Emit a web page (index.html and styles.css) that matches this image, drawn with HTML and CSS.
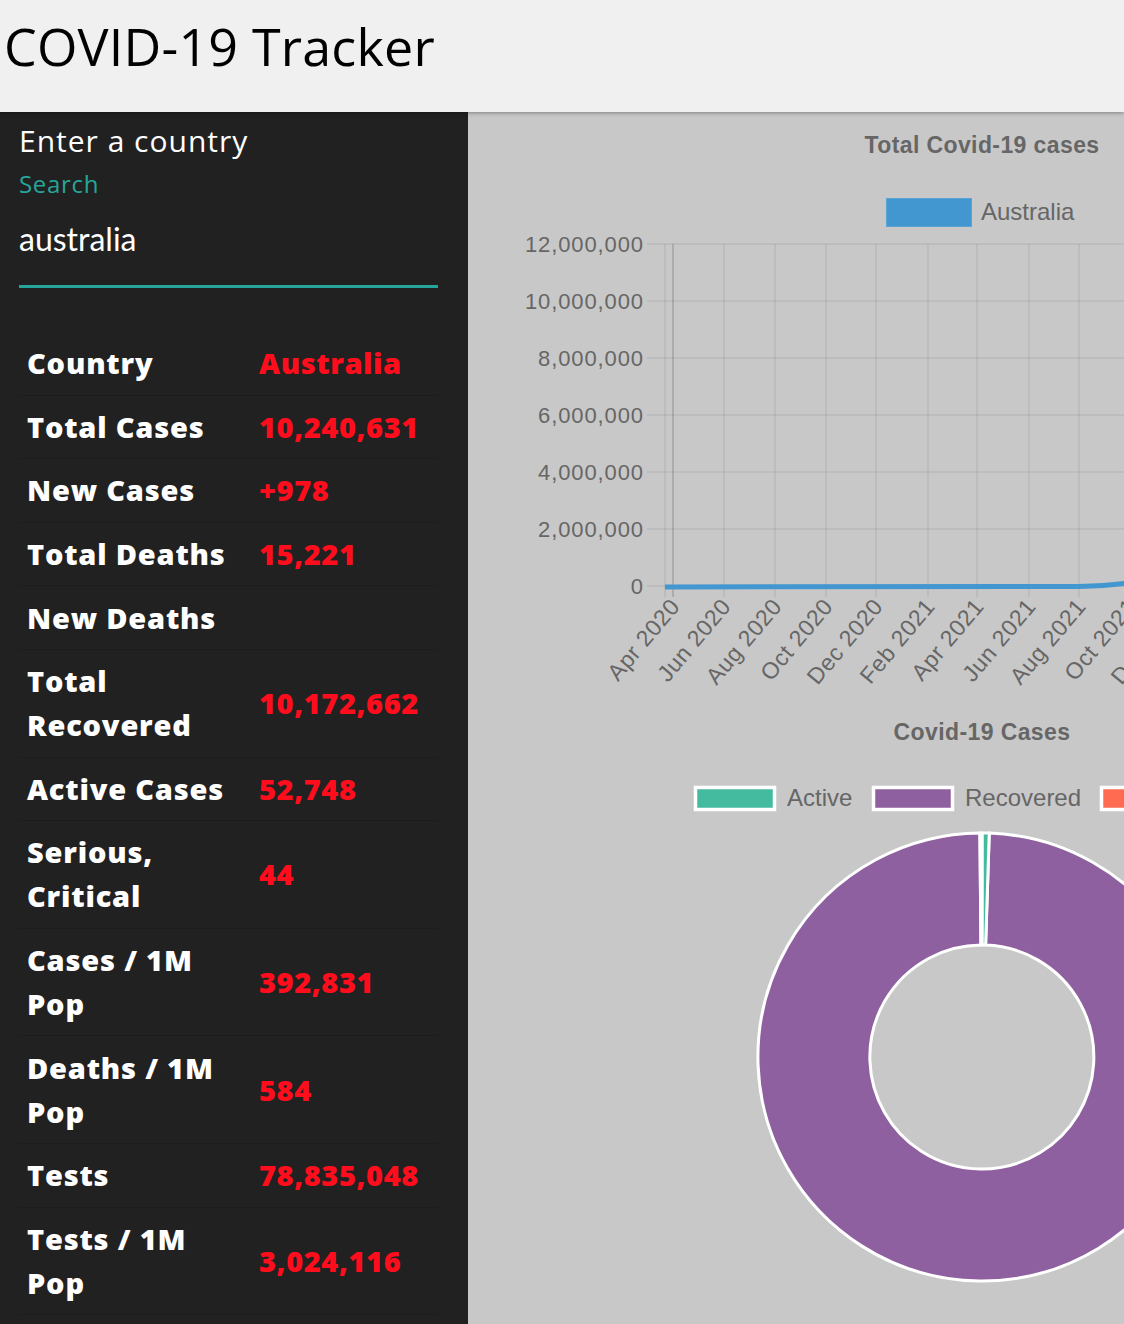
FILE: index.html
```html
<!DOCTYPE html>
<html lang="en">
<head>
<meta charset="utf-8">
<title>COVID-19 Tracker</title>
<link rel="stylesheet" href="styles.css">
</head>
<body>
<header class="topbar">
  <h1 class="title">COVID-19 Tracker</h1>
</header>
<main class="layout">
  <aside class="sidebar">
    <div class="search">
      <div class="prompt">Enter a country</div>
      <label class="search-label">Search</label>
      <div class="search-input">australia</div>
    </div>
    <table class="stats">
      <tbody>
        <tr><td class="key">Country</td><td class="val">Australia</td></tr>
        <tr><td class="key">Total Cases</td><td class="val">10,240,631</td></tr>
        <tr><td class="key">New Cases</td><td class="val">+978</td></tr>
        <tr><td class="key">Total Deaths</td><td class="val">15,221</td></tr>
        <tr><td class="key">New Deaths</td><td class="val"></td></tr>
        <tr><td class="key">Total Recovered</td><td class="val">10,172,662</td></tr>
        <tr><td class="key">Active Cases</td><td class="val">52,748</td></tr>
        <tr><td class="key">Serious, Critical</td><td class="val">44</td></tr>
        <tr><td class="key">Cases / 1M Pop</td><td class="val">392,831</td></tr>
        <tr><td class="key">Deaths / 1M Pop</td><td class="val">584</td></tr>
        <tr><td class="key">Tests</td><td class="val">78,835,048</td></tr>
        <tr><td class="key">Tests / 1M Pop</td><td class="val">3,024,116</td></tr>
      </tbody>
    </table>
  </aside>
  <section class="charts">
    <svg class="line-chart" width="1028" height="598" viewBox="0 0 1028 598">
      <g transform="translate(-468,-112)">
        <text class="chart-title" x="982" y="153" text-anchor="middle">Total Covid-19 cases</text>
        <rect x="886.5" y="198.5" width="85" height="28" fill="#4397d0" stroke="#5aa4d6" stroke-width="1"/>
        <text class="legend-text" x="981" y="220">Australia</text>
        <g class="grid">
          <line x1="647" y1="244" x2="1500" y2="244"/>
          <line x1="647" y1="301" x2="1500" y2="301"/>
          <line x1="647" y1="358" x2="1500" y2="358"/>
          <line x1="647" y1="415" x2="1500" y2="415"/>
          <line x1="647" y1="472" x2="1500" y2="472"/>
          <line x1="647" y1="529" x2="1500" y2="529"/>
          <line x1="647" y1="586" x2="1500" y2="586"/>
          <line x1="665" y1="244" x2="665" y2="597"/>
          <line x1="724" y1="244" x2="724" y2="597"/>
          <line x1="775" y1="244" x2="775" y2="597"/>
          <line x1="826" y1="244" x2="826" y2="597"/>
          <line x1="876" y1="244" x2="876" y2="597"/>
          <line x1="928" y1="244" x2="928" y2="597"/>
          <line x1="977" y1="244" x2="977" y2="597"/>
          <line x1="1029" y1="244" x2="1029" y2="597"/>
          <line x1="1079" y1="244" x2="1079" y2="597"/>
          <line x1="1130" y1="244" x2="1130" y2="597"/>
        </g>
        <line x1="673" y1="244" x2="673" y2="597" stroke="rgba(0,0,0,0.28)" stroke-width="1"/>
        <g class="axis-label" text-anchor="end">
          <text x="644" y="252">12,000,000</text>
          <text x="644" y="309">10,000,000</text>
          <text x="644" y="366">8,000,000</text>
          <text x="644" y="423">6,000,000</text>
          <text x="644" y="480">4,000,000</text>
          <text x="644" y="537">2,000,000</text>
          <text x="644" y="594">0</text>
        </g>
        <path d="M665 587 L1079 586.4 C1098 586.2 1112 585.2 1124 583.6 L1180 576" fill="none" stroke="#4397d0" stroke-width="5"/>
        <g class="axis-label x-labels" text-anchor="end">
          <text transform="translate(681,607) rotate(-50)">Apr 2020</text>
          <text transform="translate(732,607) rotate(-50)">Jun 2020</text>
          <text transform="translate(783,607) rotate(-50)">Aug 2020</text>
          <text transform="translate(834,607) rotate(-50)">Oct 2020</text>
          <text transform="translate(884,607) rotate(-50)">Dec 2020</text>
          <text transform="translate(936,607) rotate(-50)">Feb 2021</text>
          <text transform="translate(985,607) rotate(-50)">Apr 2021</text>
          <text transform="translate(1037,607) rotate(-50)">Jun 2021</text>
          <text transform="translate(1087,607) rotate(-50)">Aug 2021</text>
          <text transform="translate(1138,607) rotate(-50)">Oct 2021</text>
          <text transform="translate(1188,607) rotate(-50)">Dec 2021</text>
        </g>
      </g>
    </svg>
    <svg class="donut-chart" width="1028" height="614" viewBox="0 0 1028 614">
      <g transform="translate(-468,-710)">
        <text class="chart-title" x="982" y="740" text-anchor="middle">Covid-19 Cases</text>
        <rect x="695.5" y="787.5" width="79" height="22" fill="#44bb9f" stroke="#ffffff" stroke-width="3.5"/>
        <text class="legend-text" x="787" y="806">Active</text>
        <rect x="873.5" y="787.5" width="79" height="22" fill="#8e609f" stroke="#ffffff" stroke-width="3.5"/>
        <text class="legend-text" x="965" y="806">Recovered</text>
        <rect x="1101.5" y="787.5" width="79" height="22" fill="#ff6b50" stroke="#ffffff" stroke-width="3.5"/>
        <text class="legend-text" x="1193" y="806">Deaths</text>
        <g stroke="#ffffff" stroke-width="3" stroke-linejoin="round">
          <path d="M989.25 833.12 A224 224 0 1 1 979.91 833.01 L980.95 945 A112 112 0 1 0 985.62 945.06 Z" fill="#8e609f"/>
          <path d="M982 833 A224 224 0 0 1 989.25 833.12 L985.62 945.06 A112 112 0 0 0 982 945 Z" fill="#44bb9f"/>
          <path d="M979.91 833.01 A224 224 0 0 1 982 833 L982 945 A112 112 0 0 0 980.95 945 Z" fill="#ff6b50"/>
        </g>
      </g>
    </svg>
  </section>
</main>
</body>
</html>
```
FILE: styles.css
```css
html, body {
  margin: 0;
  padding: 0;
}

body {
  background: #c8c8c8;
  font-family: "Open Sans", "DejaVu Sans", sans-serif;
  overflow: hidden;
}

.topbar {
  height: 112px;
  box-sizing: border-box;
  background: #f0f0f0;
  padding: 20px 0 0 4px;
  position: relative;
  z-index: 2;
  box-shadow: 0 1px 4px rgba(0, 0, 0, 0.35);
}

.title {
  margin: 0;
  font-family: "Open Sans", sans-serif;
  font-weight: 400;
  font-size: 52px;
  line-height: 52px;
  color: #000;
  letter-spacing: 0.2px;
}

.layout {
  display: flex;
  min-height: 1212px;
}

.sidebar {
  width: 468px;
  flex: none;
  box-sizing: border-box;
  background: #212121;
  padding: 11px 30px 0 19px;
}

.search {
  display: flex;
  flex-direction: column;
}

.prompt {
  font-size: 30px;
  line-height: 36px;
  color: #ffffff;
  letter-spacing: 1px;
}

.search-label {
  margin-top: 10px;
  font-size: 24px;
  line-height: 30px;
  color: #26a69a;
  letter-spacing: 0.7px;
}

.search-input {
  margin-top: 20px;
  font-family: "Lato", sans-serif;
  font-size: 32px;
  line-height: 40px;
  color: #ffffff;
  padding-bottom: 26px;
  border-bottom: 3px solid #26a69a;
}

.stats {
  margin-top: 44px;
  width: 100%;
  border-collapse: collapse;
}

.stats tr {
  border-bottom: 1px solid rgba(0, 0, 0, 0.14);
}

.stats td {
  padding: 9.3px 5px;
  line-height: 44px;
  font-size: 29px;
  font-weight: 800;
  vertical-align: middle;
  letter-spacing: 0.8px;
}

.stats .key {
  width: 205px;
  color: #ffffff;
  padding-left: 8px;
  padding-right: 22px;
}

.stats .val {
  color: #ff0d1d;
  letter-spacing: 0.6px;
}

.charts {
  flex: 1;
  min-width: 0;
  overflow: hidden;
  background: #c8c8c8;
}

.line-chart,
.donut-chart {
  display: block;
}

.chart-title {
  font-family: "Liberation Sans", Arial, sans-serif;
  font-weight: 700;
  font-size: 23px;
  letter-spacing: 0.4px;
  fill: #666666;
}

.legend-text {
  font-family: "Liberation Sans", Arial, sans-serif;
  font-size: 24px;
  fill: #666666;
}

.axis-label text {
  font-family: "Liberation Sans", Arial, sans-serif;
  font-size: 22px;
  letter-spacing: 0.9px;
  fill: #666666;
}

.x-labels text {
  font-size: 23px;
  letter-spacing: 0.6px;
}

.grid line {
  stroke: rgba(0, 0, 0, 0.1);
  stroke-width: 1;
}
```
